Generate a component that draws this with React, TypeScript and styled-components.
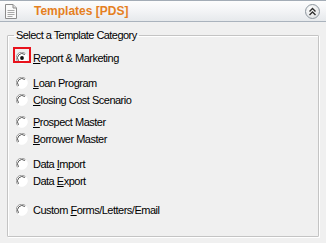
import React from "react";
import styled, { createGlobalStyle } from "styled-components";

const Global = createGlobalStyle`
  html, body { margin: 0; padding: 0; background: #f0f0f0; }
  body { font-family: "Liberation Sans", Arial, sans-serif; }
`;

const Panel = styled.div`
  width: 326px;
  height: 243px;
  display: flex;
  flex-direction: column;
  background: #f0f0f0;
  overflow: hidden;
`;

const Header = styled.div`
  box-sizing: border-box;
  height: 22px;
  flex: none;
  display: flex;
  align-items: center;
  padding: 0 6px 0 5px;
  border-top: 1px solid #a3acb6;
  border-bottom: 1px solid #aab3bd;
  background: linear-gradient(#fdfdfd, #f3f4f6 50%, #e6e9ec);
`;

const Title = styled.span`
  margin-left: 17px;
  flex: 1;
  font: bold 12px "Liberation Sans", Arial, sans-serif;
  color: #e5801f;
`;

const CollapseButton = styled.button`
  width: 15px;
  height: 15px;
  padding: 0;
  border: 1px solid #8e979f;
  border-radius: 50%;
  background: radial-gradient(circle at 40% 35%, #ffffff, #e4e6e8 70%, #c9cdd1);
  display: flex;
  align-items: center;
  justify-content: center;
`;

const Body = styled.div`
  flex: 1;
  display: flex;
  padding: 7px 7px 6px 7px;
  min-height: 0;
`;

const Group = styled.fieldset`
  flex: 1;
  margin: 0;
  padding: 0 0 0 8px;
  border: 1px solid #c4c4c4;
  border-radius: 1px;
  box-shadow: inset 1px 1px 0 #ffffff, 1px 1px 0 #ffffff;
  display: flex;
  flex-direction: column;
  min-width: 0;
`;

const Legend = styled.legend`
  margin-left: -2px;
  padding: 0 2px;
  font: 11px/13px "Liberation Sans", Arial, sans-serif;
  letter-spacing: -0.55px;
  color: #000;
`;

const Option = styled.label<{ $gap: number }>`
  position: relative;
  height: 17px;
  margin-top: ${(p) => p.$gap}px;
  display: flex;
  align-items: center;
  gap: 5px;
  font: 11px "Liberation Sans", Arial, sans-serif;
  letter-spacing: -0.5px;
  color: #000;
  white-space: nowrap;
`;

const Key = styled.span`
  text-decoration: underline;
  text-underline-offset: 1px;
`;

const Highlight = styled.span`
  position: absolute;
  left: -3px;
  top: -2px;
  width: 14px;
  height: 12px;
  border: 2px solid #e8121c;
  pointer-events: none;
`;

const DocIcon = () => (
  <svg width="12" height="15" viewBox="0 0 12 15">
    <path d="M0.5 0.5 H8 L11.5 4 V14.5 H0.5 Z" fill="#fafafa" stroke="#8c8c8c" />
    <path d="M8 0.5 V4 H11.5" fill="#e0e0e0" stroke="#8c8c8c" />
    <path d="M2.5 6.5 H9.5 M2.5 8.5 H9.5 M2.5 10.5 H9.5 M2.5 12.5 H7.5" stroke="#a8a8a8" />
  </svg>
);

const ChevronsUp = () => (
  <svg width="9" height="9" viewBox="0 0 9 9">
    <path d="M1.5 4.5 L4.5 1.5 L7.5 4.5 M1.5 8 L4.5 5 L7.5 8" fill="none" stroke="#2e2e2e" strokeWidth="1.4" />
  </svg>
);

const Radio = ({ checked }: { checked?: boolean }) => (
  <svg width="12" height="12" viewBox="0 0 12 12" style={{ flex: "none" }}>
    <circle cx="6" cy="6" r="5.5" fill="#ffffff" />
    <path d="M1.8 9.6 A5.5 5.5 0 0 1 9.6 1.8" fill="none" stroke="#9a9a9a" />
    <path d="M2.6 8.8 A4.4 4.4 0 0 1 8.8 2.6" fill="none" stroke="#5a5a5a" />
    <path d="M9.6 1.8 A5.5 5.5 0 0 1 1.8 9.6" fill="none" stroke="#ffffff" />
    {checked && <circle cx="6" cy="6" r="1.9" fill="#111" />}
  </svg>
);

type Item = { pre: string; key: string; post: string; gap: number; checked?: boolean };

const items: Item[] = [
  { pre: "", key: "R", post: "eport & Marketing", gap: 7, checked: true },
  { pre: "", key: "L", post: "oan Program", gap: 8 },
  { pre: "", key: "C", post: "losing Cost Scenario", gap: 0 },
  { pre: "", key: "P", post: "rospect Master", gap: 5 },
  { pre: "", key: "B", post: "orrower Master", gap: 0 },
  { pre: "Data ", key: "I", post: "mport", gap: 8 },
  { pre: "Data ", key: "E", post: "xport", gap: 0 },
  { pre: "Custom ", key: "F", post: "orms/Letters/Email", gap: 12 },
];

export default function App() {
  return (
    <>
      <Global />
      <Panel>
        <Header>
          <DocIcon />
          <Title>Templates [PDS]</Title>
          <CollapseButton aria-label="Collapse">
            <ChevronsUp />
          </CollapseButton>
        </Header>
        <Body>
          <Group>
            <Legend>Select a Template Category</Legend>
            {items.map((it) => (
              <Option key={it.key + it.post} $gap={it.gap}>
                <Radio checked={it.checked} />
                {it.checked && <Highlight />}
                <span>
                  {it.pre}
                  <Key>{it.key}</Key>
                  {it.post}
                </span>
              </Option>
            ))}
          </Group>
        </Body>
      </Panel>
    </>
  );
}
